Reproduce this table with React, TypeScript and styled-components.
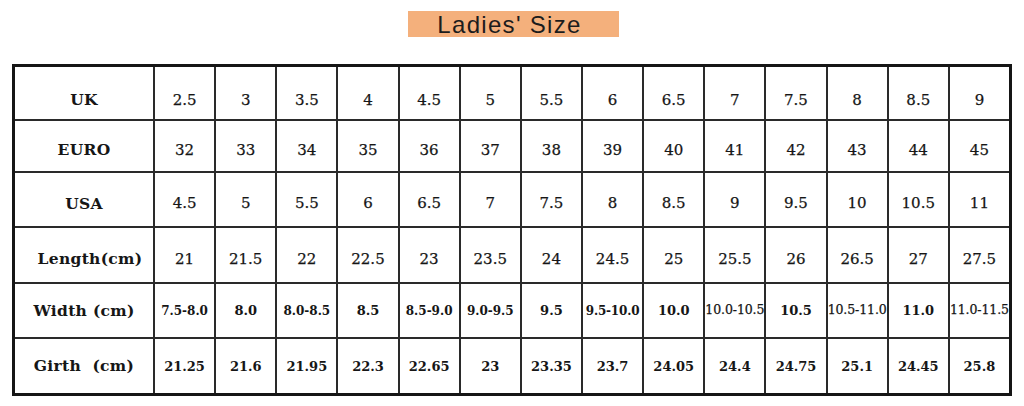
import React from 'react';
import styled, { createGlobalStyle } from 'styled-components';

const GlobalStyle = createGlobalStyle`
  html, body {
    margin: 0;
    padding: 0;
    background: #ffffff;
  }
  body {
    width: 1024px;
    height: 406px;
    overflow: hidden;
  }
`;

const Page = styled.div`
  width: 1024px;
  height: 406px;
  display: flex;
  flex-direction: column;
  align-items: center;
  padding-top: 11px;
  box-sizing: border-box;
`;

const Title = styled.div`
  width: 211px;
  height: 26px;
  margin-left: 3px;
  background: #f4b07c;
  display: flex;
  align-items: center;
  justify-content: center;
  padding-right: 8px;
  padding-top: 1px;
  box-sizing: border-box;
  font-family: 'Liberation Sans', Arial, sans-serif;
  font-size: 24px;
  letter-spacing: 1.3px;
  color: #1c1c1c;
  line-height: 1;
`;

const Grid = styled.div`
  margin-top: 27px;
  width: 1000px;
  box-sizing: border-box;
  border: 3px solid #151515;
  background: #2a2a2a;
  display: grid;
  grid-template-columns: 138px repeat(14, 1fr);
  grid-template-rows: 52px 50px 53px 54px 53px 54px;
  gap: 2px;
`;

const Cell = styled.div<{ $shift: number }>`
  background: #ffffff;
  display: flex;
  align-items: center;
  justify-content: center;
  padding-top: ${(p) => p.$shift * 2}px;
  box-sizing: border-box;
  font-family: 'DejaVu Serif', 'Liberation Serif', serif;
  color: #161616;
  white-space: pre;
  line-height: 1;
`;

const Label = styled.span<{ $nudge: number }>`
  font-weight: bold;
  font-size: 15.5px;
  letter-spacing: 0.3px;
  margin-left: ${(p) => p.$nudge}px;
`;

const Value = styled.span<{ $size: number; $bold: boolean; $track: number }>`
  font-size: ${(p) => p.$size}px;
  font-weight: ${(p) => (p.$bold ? 'bold' : 'normal')};
  letter-spacing: ${(p) => p.$track}px;
  -webkit-text-stroke: ${(p) => (p.$bold ? 0 : 0.25)}px #161616;
`;

interface SizeRow {
  label: string;
  nudge?: number;
  values: string[];
  shift: number;
  small?: boolean;
}

const rows: SizeRow[] = [
  {
    label: 'UK',
    values: ['2.5', '3', '3.5', '4', '4.5', '5', '5.5', '6', '6.5', '7', '7.5', '8', '8.5', '9'],
    shift: 7,
  },
  {
    label: 'EURO',
    values: ['32', '33', '34', '35', '36', '37', '38', '39', '40', '41', '42', '43', '44', '45'],
    shift: 4,
  },
  {
    label: 'USA',
    values: ['4.5', '5', '5.5', '6', '6.5', '7', '7.5', '8', '8.5', '9', '9.5', '10', '10.5', '11'],
    shift: 4,
  },
  {
    label: 'Length(cm)',
    nudge: 12,
    values: ['21', '21.5', '22', '22.5', '23', '23.5', '24', '24.5', '25', '25.5', '26', '26.5', '27', '27.5'],
    shift: 4,
  },
  {
    label: 'Width (cm)',
    values: [
      '7.5-8.0', '8.0', '8.0-8.5', '8.5', '8.5-9.0', '9.0-9.5', '9.5',
      '9.5-10.0', '10.0', '10.0-10.5', '10.5', '10.5-11.0', '11.0', '11.0-11.5',
    ],
    shift: 0,
    small: true,
  },
  {
    label: 'Girth  (cm)',
    values: ['21.25', '21.6', '21.95', '22.3', '22.65', '23', '23.35', '23.7', '24.05', '24.4', '24.75', '25.1', '24.45', '25.8'],
    shift: 0,
    small: true,
  },
];

const valueStyle = (value: string, small?: boolean) => {
  if (!small) return { size: 15, bold: false, track: 0 };
  if (value.length >= 9) return { size: 12.5, bold: false, track: -0.1 };
  if (value.length === 8) return { size: 12, bold: true, track: -0.2 };
  if (value.includes('-')) return { size: 12, bold: true, track: 0 };
  return { size: 13, bold: true, track: 0 };
};

function App() {
  return (
    <>
      <GlobalStyle />
      <Page>
        <Title>Ladies' Size</Title>
        <Grid>
          {rows.map((row) => (
            <React.Fragment key={row.label}>
              <Cell $shift={row.shift}>
                <Label $nudge={row.nudge ?? 0}>{row.label}</Label>
              </Cell>
              {row.values.map((value, i) => {
                const s = valueStyle(value, row.small);
                return (
                  <Cell key={i} $shift={row.shift}>
                    <Value $size={s.size} $bold={s.bold} $track={s.track}>
                      {value}
                    </Value>
                  </Cell>
                );
              })}
            </React.Fragment>
          ))}
        </Grid>
      </Page>
    </>
  );
}

export default App;
